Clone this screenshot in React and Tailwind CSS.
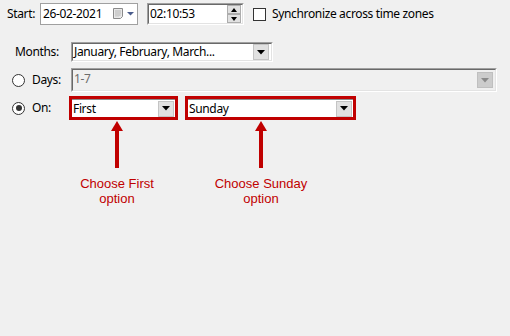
import React from 'react';

const ui = { fontFamily: '"Noto Sans", "Open Sans", sans-serif' };
const note = { fontFamily: '"Liberation Sans", Arial, sans-serif' };

function DropButton({ disabled }) {
  return (
    <div
      className={`w-[16px] h-[16px] flex items-center justify-center border ${
        disabled ? 'bg-[#cccccc] border-[#bfbfbf]' : 'bg-[#e1e1e1] border-[#c4c4c4]'
      }`}
    >
      <svg width="8" height="5" viewBox="0 0 8 5">
        <path d="M0 0h8L4 4.5z" fill={disabled ? '#8a8a8a' : '#000'} />
      </svg>
    </div>
  );
}

function Sunken({ className = '', children, disabled }) {
  return (
    <div
      className={`border-t border-l border-t-[#a0a0a0] border-l-[#a0a0a0] border-r border-b border-r-white border-b-white ${className}`}
    >
      <div
        className={`h-full border-t border-l border-t-[#696969] border-l-[#696969] border-r border-b border-r-[#e3e3e3] border-b-[#e3e3e3] flex items-center ${
          disabled ? 'bg-[#f0f0f0]' : 'bg-white'
        }`}
      >
        {children}
      </div>
    </div>
  );
}

function Radio({ checked }) {
  return (
    <div className="w-[13px] h-[13px] rounded-full border border-[#333] bg-white flex items-center justify-center">
      {checked && <div className="w-[6px] h-[6px] rounded-full bg-[#333]" />}
    </div>
  );
}

function Arrow() {
  return (
    <svg width="14" height="49" viewBox="0 0 14 49" className="block mx-auto">
      <path d="M7 1L13 11H1z" fill="#c00000" />
      <path d="M7 10V48" stroke="#c00000" strokeWidth="4" />
    </svg>
  );
}

export default function App() {
  return (
    <div
      className="w-[510px] h-[336px] bg-[#f0f0f0] text-[12px] tracking-[-0.35px] text-black overflow-hidden"
      style={ui}
    >
      {/* start row */}
      <div className="flex items-center pt-[3px] pl-[7px] h-[25px]">
        <span className="w-[33px]">Start:</span>
        <div className="w-[98px] h-[22px] border border-[#a0a0a0] bg-white flex items-center pl-[2px]">
          <span className="flex-1">26-02-2021</span>
          <svg width="21" height="12" viewBox="0 0 21 12" className="mr-[3px]">
            <path d="M0.5 0.5h9v8l-2 2h-7z" fill="#e8e8e8" stroke="#8a8a8a" />
            <path d="M2 3h6M2 5h6M2 7h5M3 2v7M5 2v7M7 2v6" stroke="#b5b5b5" strokeWidth="0.6" />
            <path d="M14 4h7l-3.5 3.5z" fill="#4a5c8c" />
          </svg>
        </div>
        <Sunken className="ml-[9px] w-[97px] h-[22px]">
          <span className="flex-1 pl-[1px]">02:10:53</span>
          <div className="flex flex-col mr-[1px]">
            <div className="w-[14px] h-[9px] bg-[#e1e1e1] border border-[#adadad] flex items-center justify-center">
              <svg width="6" height="4" viewBox="0 0 6 4"><path d="M0 4h6L3 0z" fill="#000" /></svg>
            </div>
            <div className="w-[14px] h-[9px] bg-[#e1e1e1] border border-[#adadad] flex items-center justify-center">
              <svg width="6" height="4" viewBox="0 0 6 4"><path d="M0 0h6L3 4z" fill="#000" /></svg>
            </div>
          </div>
        </Sunken>
        <div className="ml-[9px] w-[13px] h-[13px] border border-[#333] bg-white" />
        <span className="ml-[6px]">Synchronize across time zones</span>
      </div>

      {/* months */}
      <div className="flex items-center mt-[17px] pl-[15px] h-[20px]">
        <span className="w-[56px]">Months:</span>
        <Sunken className="w-[202px] h-[20px]">
          <span className="flex-1 pl-[1px]">January, February, March...</span>
          <div className="mr-[2px]"><DropButton /></div>
        </Sunken>
      </div>

      {/* days */}
      <div className="flex items-center mt-[6px] pl-[12px] h-[24px]">
        <Radio />
        <span className="ml-[7px] w-[39px]">Days:</span>
        <Sunken disabled className="w-[426px] h-[24px]">
          <span className="flex-1 pl-[1px] text-[#6d6d6d] self-start">1-7</span>
          <div className="mr-[2px]"><DropButton disabled /></div>
        </Sunken>
      </div>

      {/* on */}
      <div className="flex items-center mt-[4px] pl-[12px] h-[24px]">
        <Radio checked />
        <span className="ml-[7px] w-[37px]">On:</span>
        <div className="w-[109px] h-[24px] border-[3px] border-[#c00000] bg-white">
          <div className="h-full border-t border-t-[#8a8a8a] flex items-center">
            <span className="flex-1 pl-[1px]">First</span>
            <div className="mr-[1px]"><DropButton /></div>
          </div>
        </div>
        <div className="ml-[7px] w-[171px] h-[24px] border-[3px] border-[#c00000] bg-white">
          <div className="h-full border-t border-t-[#8a8a8a] flex items-center">
            <span className="flex-1 pl-[1px]">Sunday</span>
            <div className="mr-[1px]"><DropButton /></div>
          </div>
        </div>
      </div>

      {/* annotations */}
      <div className="flex pl-[62px] text-[13px] leading-[15px] tracking-normal text-[#c00000] text-center" style={note}>
        <div className="w-[110px]">
          <Arrow />
          <div className="mt-[7px]">Choose First<br />option</div>
        </div>
        <div className="w-[110px] ml-[34px]">
          <Arrow />
          <div className="mt-[7px]">Choose Sunday<br />option</div>
        </div>
      </div>
    </div>
  );
}
